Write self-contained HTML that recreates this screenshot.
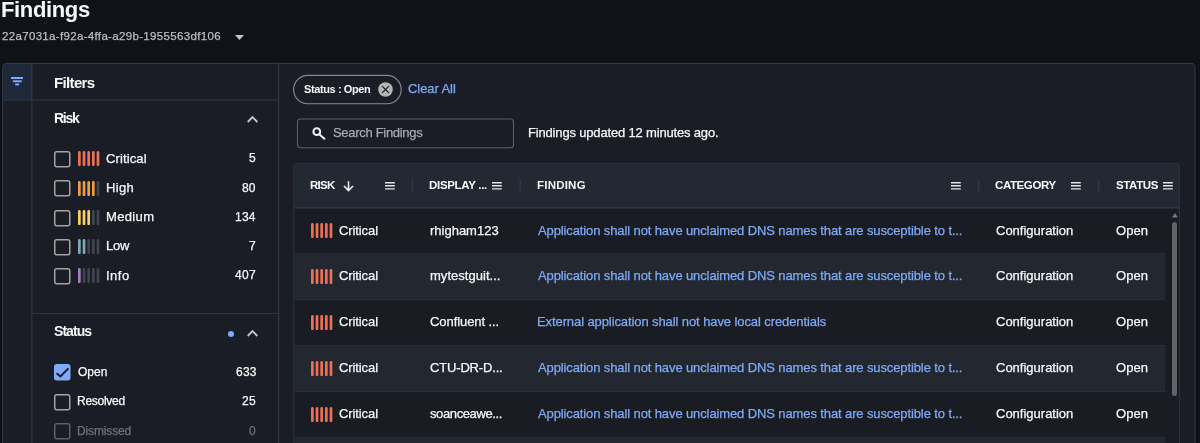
<!DOCTYPE html>
<html lang="en"><head><meta charset="utf-8"><title>Findings</title>
<style>
*{box-sizing:border-box;margin:0;padding:0}
html,body{width:1200px;height:443px;overflow:hidden;background:#0f1217;font-family:"Liberation Sans",sans-serif;color:#f2f3f5}
.abs{position:absolute}
.t{position:absolute;white-space:nowrap;line-height:1;will-change:transform;-webkit-text-stroke:0.25px currentColor}
.panel{position:absolute;background:#1a1d25;border:1px solid #2e333e}
.cb{position:absolute;width:16.5px;height:16.5px;border:1.6px solid #a3a4a8;border-radius:2.5px}
.hl{position:absolute;height:1px;background:#2e333e}
.vl{position:absolute;width:1px;background:#2e333e}
</style></head><body>

<div class="t" id="title" style="left:1.45px;top:-0.62px;font-size:22px;font-weight:700;-webkit-text-stroke:0;letter-spacing:-0.360px;color:#f7f8f9">Findings</div>
<div class="t" id="sub" style="left:2.26px;top:31.27px;font-size:11.5px;letter-spacing:0.330px;color:#bcbec4">22a7031a-f92a-4ffa-a29b-1955563df106</div>
<svg class="abs" style="left:235px;top:35px" width="9" height="5" viewBox="0 0 9 5"><path d="M0 0h9L4.5 5z" fill="#c3c5ca"/></svg>
<svg class="abs" style="left:0;top:0" width="1200" height="443" viewBox="0 0 1200 443"><path d="M2.6 445V67.45a4 4 0 0 1 4-4H1191.1a4 4 0 0 1 4 4V445" fill="none" stroke="#0a0c0f" stroke-width="3.4"/><path d="M2.6 445V67.45a4 4 0 0 1 4-4H1191.1a4 4 0 0 1 4 4V445" fill="#1a1d25" stroke="#313844" stroke-width="1.15"/><path d="M3.1500000000000004 100V67.45a3.5 3.5 0 0 1 3.5-3.45H31.85V100z" fill="#1e283a"/><rect x="31.3" y="63.95" width="1.1" height="400" fill="#313844"/><rect x="278.05" y="63.95" width="1.1" height="400" fill="#313844"/><rect x="3.1" y="99.45" width="274.95" height="1.1" fill="#2f3641"/><rect x="32.4" y="313" width="245.65" height="1" fill="#2d333e"/></svg>
<svg class="abs" style="left:10.8px;top:77.4px" width="12.5" height="9" viewBox="0 0 12.5 9"><rect x="0" y="0" width="12.5" height="2" fill="#7eaaf6"/><rect x="1.8" y="3.3" width="8.9" height="1.9" fill="#7eaaf6"/><rect x="4.2" y="6.5" width="3.9" height="1.9" fill="#7eaaf6"/></svg>
<div class="t" id="filters" style="left:53.54px;top:75.20px;font-size:15px;font-weight:700;-webkit-text-stroke:0;letter-spacing:-0.645px;color:#f7f8f9">Filters</div>
<div class="t" id="risk" style="left:53.72px;top:110.55px;font-size:14px;font-weight:700;-webkit-text-stroke:0;letter-spacing:-1.250px;color:#f7f8f9">Risk</div>
<svg class="abs" style="left:247px;top:115px" width="11" height="8" viewBox="0 0 11 8"><path d="M0.7 7L5.5 2.1L10.3 7" fill="none" stroke="#c6c8cc" stroke-width="1.8"/></svg>
<svg class="abs" style="left:54px;top:151.10px" width="17" height="17" viewBox="0 0 17 17"><rect x="0.75" y="0.75" width="15" height="15" rx="2" fill="none" stroke="#a5a3a0" stroke-width="1.5"/></svg>
<svg class="abs" style="left:77.6px;top:151.4px" width="24" height="15.2" viewBox="0 0 24 15.2"><rect x="0.00" y="0" width="2.7" height="15.2" rx="1.4" fill="#ef7053"/><rect x="4.66" y="0" width="2.7" height="15.2" rx="1.4" fill="#ef7053"/><rect x="9.32" y="0" width="2.7" height="15.2" rx="1.4" fill="#ef7053"/><rect x="13.98" y="0" width="2.7" height="15.2" rx="1.4" fill="#ef7053"/><rect x="18.64" y="0" width="2.7" height="15.2" rx="1.4" fill="#ef7053"/></svg>
<div class="t" id="rk0" style="left:106.40px;top:151.50px;font-size:13px;letter-spacing:0.116px;color:#f7f8f9">Critical</div>
<div class="t" id="rc0" style="left:249.29px;top:152.34px;font-size:12px;letter-spacing:0.000px;color:#f7f8f9">5</div>
<svg class="abs" style="left:54px;top:180.35px" width="17" height="17" viewBox="0 0 17 17"><rect x="0.75" y="0.75" width="15" height="15" rx="2" fill="none" stroke="#a5a3a0" stroke-width="1.5"/></svg>
<svg class="abs" style="left:77.6px;top:180.67000000000002px" width="24" height="15.2" viewBox="0 0 24 15.2"><rect x="0.00" y="0" width="2.7" height="15.2" rx="1.4" fill="#f09b46"/><rect x="4.66" y="0" width="2.7" height="15.2" rx="1.4" fill="#f09b46"/><rect x="9.32" y="0" width="2.7" height="15.2" rx="1.4" fill="#f09b46"/><rect x="13.98" y="0" width="2.7" height="15.2" rx="1.4" fill="#f09b46"/><rect x="18.64" y="0" width="2.7" height="15.2" rx="1.4" fill="#3f4551"/></svg>
<div class="t" id="rk1" style="left:105.93px;top:180.75px;font-size:13px;letter-spacing:0.313px;color:#f7f8f9">High</div>
<div class="t" id="rc1" style="left:242.39px;top:181.59px;font-size:12px;letter-spacing:-0.037px;color:#f7f8f9">80</div>
<svg class="abs" style="left:54px;top:209.60px" width="17" height="17" viewBox="0 0 17 17"><rect x="0.75" y="0.75" width="15" height="15" rx="2" fill="none" stroke="#a5a3a0" stroke-width="1.5"/></svg>
<svg class="abs" style="left:77.6px;top:209.94px" width="24" height="15.2" viewBox="0 0 24 15.2"><rect x="0.00" y="0" width="2.7" height="15.2" rx="1.4" fill="#fad264"/><rect x="4.66" y="0" width="2.7" height="15.2" rx="1.4" fill="#fad264"/><rect x="9.32" y="0" width="2.7" height="15.2" rx="1.4" fill="#fad264"/><rect x="13.98" y="0" width="2.7" height="15.2" rx="1.4" fill="#3f4551"/><rect x="18.64" y="0" width="2.7" height="15.2" rx="1.4" fill="#3f4551"/></svg>
<div class="t" id="rk2" style="left:105.64px;top:210.00px;font-size:13px;letter-spacing:0.353px;color:#f7f8f9">Medium</div>
<div class="t" id="rc2" style="left:234.65px;top:210.84px;font-size:12px;letter-spacing:0.219px;color:#f7f8f9">134</div>
<svg class="abs" style="left:54px;top:238.85px" width="17" height="17" viewBox="0 0 17 17"><rect x="0.75" y="0.75" width="15" height="15" rx="2" fill="none" stroke="#a5a3a0" stroke-width="1.5"/></svg>
<svg class="abs" style="left:77.6px;top:239.21px" width="24" height="15.2" viewBox="0 0 24 15.2"><rect x="0.00" y="0" width="2.7" height="15.2" rx="1.4" fill="#7daab4"/><rect x="4.66" y="0" width="2.7" height="15.2" rx="1.4" fill="#7daab4"/><rect x="9.32" y="0" width="2.7" height="15.2" rx="1.4" fill="#3f4551"/><rect x="13.98" y="0" width="2.7" height="15.2" rx="1.4" fill="#3f4551"/><rect x="18.64" y="0" width="2.7" height="15.2" rx="1.4" fill="#3f4551"/></svg>
<div class="t" id="rk3" style="left:105.64px;top:239.25px;font-size:13px;letter-spacing:-0.185px;color:#f7f8f9">Low</div>
<div class="t" id="rc3" style="left:249.41px;top:240.09px;font-size:12px;letter-spacing:0.000px;color:#f7f8f9">7</div>
<svg class="abs" style="left:54px;top:268.10px" width="17" height="17" viewBox="0 0 17 17"><rect x="0.75" y="0.75" width="15" height="15" rx="2" fill="none" stroke="#a5a3a0" stroke-width="1.5"/></svg>
<svg class="abs" style="left:77.6px;top:268.48px" width="24" height="15.2" viewBox="0 0 24 15.2"><rect x="0.00" y="0" width="2.7" height="15.2" rx="1.4" fill="#aa7dc3"/><rect x="4.66" y="0" width="2.7" height="15.2" rx="1.4" fill="#3f4551"/><rect x="9.32" y="0" width="2.7" height="15.2" rx="1.4" fill="#3f4551"/><rect x="13.98" y="0" width="2.7" height="15.2" rx="1.4" fill="#3f4551"/><rect x="18.64" y="0" width="2.7" height="15.2" rx="1.4" fill="#3f4551"/></svg>
<div class="t" id="rk4" style="left:105.50px;top:268.50px;font-size:13px;letter-spacing:0.480px;color:#f7f8f9">Info</div>
<div class="t" id="rc4" style="left:234.69px;top:269.34px;font-size:12px;letter-spacing:0.326px;color:#f7f8f9">407</div>
<div class="t" id="status" style="left:53.67px;top:324.15px;font-size:14px;font-weight:700;-webkit-text-stroke:0;letter-spacing:-0.945px;color:#f7f8f9">Status</div>
<div class="abs" style="left:228px;top:331px;width:6px;height:6px;border-radius:50%;background:#7eaaf6"></div>
<svg class="abs" style="left:247px;top:328.5px" width="11" height="8" viewBox="0 0 11 8"><path d="M0.7 7L5.5 2.1L10.3 7" fill="none" stroke="#c6c8cc" stroke-width="1.8"/></svg>
<svg class="abs" style="left:54px;top:364.30px" width="17" height="17" viewBox="0 0 17 17"><rect x="0.75" y="0.75" width="15" height="15" rx="2" fill="#7eaaf6" stroke="#7eaaf6" stroke-width="1.5"/></svg>
<svg class="abs" style="left:54px;top:364.3px" width="17" height="17" viewBox="0 0 17 17"><path d="M2.6 9.3L6.4 12.5L14.4 4.3" fill="none" stroke="#14171d" stroke-width="1.9"/></svg>
<div class="t" id="sk0" style="left:77.87px;top:366.04px;font-size:12px;letter-spacing:-0.015px;color:#f7f8f9">Open</div>
<div class="t" id="sc0" style="left:235.52px;top:366.04px;font-size:12px;letter-spacing:0.226px;color:#f7f8f9">633</div>
<svg class="abs" style="left:54px;top:393.60px" width="17" height="17" viewBox="0 0 17 17"><rect x="0.75" y="0.75" width="15" height="15" rx="2" fill="none" stroke="#a5a3a0" stroke-width="1.5"/></svg>
<div class="t" id="sk1" style="left:77.34px;top:395.34px;font-size:12px;letter-spacing:-0.274px;color:#f7f8f9">Resolved</div>
<div class="t" id="sc1" style="left:242.44px;top:395.34px;font-size:12px;letter-spacing:0.203px;color:#f7f8f9">25</div>
<svg class="abs" style="left:54px;top:422.90px" width="17" height="17" viewBox="0 0 17 17"><rect x="0.75" y="0.75" width="15" height="15" rx="2" fill="none" stroke="#5d6069" stroke-width="1.5"/></svg>
<div class="t" id="sk2" style="left:77.26px;top:424.64px;font-size:12px;letter-spacing:-0.141px;color:#6d717a">Dismissed</div>
<div class="t" id="sc2" style="left:249.31px;top:424.64px;font-size:12px;letter-spacing:0.000px;color:#6d717a">0</div>
<svg class="abs" style="left:290px;top:72px" width="116" height="36" viewBox="0 0 116 36"><rect x="3.6" y="3.4" width="107.6" height="28.3" rx="14.15" fill="none" stroke="#858993" stroke-width="1.15"/></svg>
<div class="t" id="chip" style="left:303.96px;top:83.69px;font-size:11px;font-weight:700;-webkit-text-stroke:0;letter-spacing:-0.395px;color:#f7f8f9">Status : Open</div>
<svg class="abs" style="left:378.2px;top:81.8px" width="15" height="15" viewBox="0 0 15 15"><circle cx="7.5" cy="7.5" r="7.3" fill="#b6b4b0"/><path d="M4.1 4.1L10.9 10.9M10.9 4.1L4.1 10.9" stroke="#1a1d25" stroke-width="1.2"/></svg>
<div class="t" id="clear" style="left:408.06px;top:82.00px;font-size:13px;letter-spacing:-0.074px;color:#7eaaf6">Clear All</div>
<svg class="abs" style="left:295px;top:116px" width="222" height="36" viewBox="0 0 222 36"><rect x="2.5" y="3.0" width="216" height="28.8" rx="3" fill="none" stroke="#5a5f6a" stroke-width="1.1"/></svg>
<svg class="abs" style="left:312px;top:127px" width="14" height="13" viewBox="0 0 14 13"><circle cx="4.8" cy="4.7" r="3.4" fill="none" stroke="#f2f3f5" stroke-width="2"/><path d="M7.3 7.2L12.4 11.8" stroke="#f2f3f5" stroke-width="1.9" stroke-linecap="round"/></svg>
<div class="t" id="search" style="left:332.68px;top:126.20px;font-size:13px;letter-spacing:-0.305px;color:#a6a9b0">Search Findings</div>
<div class="t" id="upd" style="left:527.64px;top:126.00px;font-size:13px;letter-spacing:-0.171px;color:#f7f8f9">Findings updated 12 minutes ago.</div>
<svg class="abs" style="left:0;top:0" width="1200" height="443" viewBox="0 0 1200 443"><path d="M293.7 444V166.6a3 3 0 0 1 3-3H1176.5a3 3 0 0 1 3 3V444" fill="#191c23" stroke="#2c323d" stroke-width="1.1"/><path d="M294.2 207.7V166.6a2.5 2.5 0 0 1 2.5-2.5H1176.5a2.5 2.5 0 0 1 2.5 2.5V207.7z" fill="#232933"/><rect x="294.2" y="254.17" width="871.10" height="44.97" fill="#222730"/><rect x="294.2" y="346.11" width="871.10" height="44.97" fill="#222730"/><rect x="294.2" y="438.05" width="871.10" height="44.97" fill="#222730"/><rect x="294.2" y="206.95" width="884.80" height="1.6" fill="#2f3643"/><rect x="294.2" y="253.17" width="871.10" height="1" fill="#2b313c"/><rect x="294.2" y="299.14" width="871.10" height="1" fill="#2b313c"/><rect x="294.2" y="345.11" width="871.10" height="1" fill="#2b313c"/><rect x="294.2" y="391.08" width="871.10" height="1" fill="#2b313c"/><rect x="294.2" y="437.05" width="871.10" height="1" fill="#2b313c"/><rect x="294.2" y="483.02" width="871.10" height="1" fill="#2b313c"/><rect x="411.8" y="179.3" width="1" height="12.5" fill="#383e4a"/><rect x="519.7" y="179.3" width="1" height="12.5" fill="#383e4a"/><rect x="978.2" y="179.3" width="1" height="12.5" fill="#383e4a"/><rect x="1098.2" y="179.3" width="1" height="12.5" fill="#383e4a"/></svg>
<div class="t" id="h1" style="left:309.92px;top:180.47px;font-size:11.5px;font-weight:700;-webkit-text-stroke:0;letter-spacing:-0.743px;color:#f7f8f9">RISK</div>
<svg class="abs" style="left:342.6px;top:180.6px" width="11" height="11" viewBox="0 0 11 11"><path d="M5.5 .3V9.2M1 5L5.5 9.5L10 5" fill="none" stroke="#f2f3f5" stroke-width="1.6"/></svg>
<svg class="abs" style="left:384.6px;top:181.7px" width="10" height="8" viewBox="0 0 10 8"><path d="M0 .7h9.8M0 3.75h9.8M0 6.8h9.8" stroke="#e4e5e8" stroke-width="1.35"/></svg>
<div class="t" id="h2" style="left:429.40px;top:180.47px;font-size:11.5px;font-weight:700;-webkit-text-stroke:0;letter-spacing:-0.311px;color:#f7f8f9">DISPLAY ...</div>
<svg class="abs" style="left:492.2px;top:181.7px" width="10" height="8" viewBox="0 0 10 8"><path d="M0 .7h9.8M0 3.75h9.8M0 6.8h9.8" stroke="#e4e5e8" stroke-width="1.35"/></svg>
<div class="t" id="h3" style="left:537.34px;top:180.47px;font-size:11.5px;font-weight:700;-webkit-text-stroke:0;letter-spacing:0.218px;color:#f7f8f9">FINDING</div>
<svg class="abs" style="left:950.5px;top:181.7px" width="10" height="8" viewBox="0 0 10 8"><path d="M0 .7h9.8M0 3.75h9.8M0 6.8h9.8" stroke="#e4e5e8" stroke-width="1.35"/></svg>
<div class="t" id="h4" style="left:995.48px;top:180.47px;font-size:11.5px;font-weight:700;-webkit-text-stroke:0;letter-spacing:-0.402px;color:#f7f8f9">CATEGORY</div>
<svg class="abs" style="left:1070.7px;top:181.7px" width="10" height="8" viewBox="0 0 10 8"><path d="M0 .7h9.8M0 3.75h9.8M0 6.8h9.8" stroke="#e4e5e8" stroke-width="1.35"/></svg>
<div class="t" id="h5" style="left:1115.52px;top:180.47px;font-size:11.5px;font-weight:700;-webkit-text-stroke:0;letter-spacing:-0.371px;color:#f7f8f9">STATUS</div>
<svg class="abs" style="left:1163.2px;top:181.7px" width="10" height="8" viewBox="0 0 10 8"><path d="M0 .7h9.8M0 3.75h9.8M0 6.8h9.8" stroke="#e4e5e8" stroke-width="1.35"/></svg>
<svg class="abs" style="left:310.7px;top:223.1px" width="24" height="15.2" viewBox="0 0 24 15.2"><rect x="0.00" y="0" width="2.7" height="15.2" rx="1.4" fill="#ef7053"/><rect x="4.66" y="0" width="2.7" height="15.2" rx="1.4" fill="#ef7053"/><rect x="9.32" y="0" width="2.7" height="15.2" rx="1.4" fill="#ef7053"/><rect x="13.98" y="0" width="2.7" height="15.2" rx="1.4" fill="#ef7053"/><rect x="18.64" y="0" width="2.7" height="15.2" rx="1.4" fill="#ef7053"/></svg>
<div class="t" id="a0" style="left:338.63px;top:223.60px;font-size:13px;letter-spacing:-0.100px;color:#f7f8f9">Critical</div>
<div class="t" id="b0" style="left:429.56px;top:223.60px;font-size:13px;letter-spacing:-0.004px;color:#f7f8f9">rhigham123</div>
<div class="t" id="c0" style="left:537.76px;top:223.60px;font-size:13px;letter-spacing:-0.113px;color:#7eaaf6">Application shall not have unclaimed DNS names that are susceptible to t...</div>
<div class="t" id="d0" style="left:995.60px;top:223.60px;font-size:13px;letter-spacing:0.000px;color:#f7f8f9">Configuration</div>
<div class="t" id="e0" style="left:1115.59px;top:223.60px;font-size:13px;letter-spacing:0.080px;color:#f7f8f9">Open</div>
<svg class="abs" style="left:310.7px;top:268.95px" width="24" height="15.2" viewBox="0 0 24 15.2"><rect x="0.00" y="0" width="2.7" height="15.2" rx="1.4" fill="#ef7053"/><rect x="4.66" y="0" width="2.7" height="15.2" rx="1.4" fill="#ef7053"/><rect x="9.32" y="0" width="2.7" height="15.2" rx="1.4" fill="#ef7053"/><rect x="13.98" y="0" width="2.7" height="15.2" rx="1.4" fill="#ef7053"/><rect x="18.64" y="0" width="2.7" height="15.2" rx="1.4" fill="#ef7053"/></svg>
<div class="t" id="a1" style="left:338.63px;top:269.45px;font-size:13px;letter-spacing:-0.100px;color:#f7f8f9">Critical</div>
<div class="t" id="b1" style="left:429.56px;top:269.45px;font-size:13px;letter-spacing:0.034px;color:#f7f8f9">mytestguit...</div>
<div class="t" id="c1" style="left:537.76px;top:269.45px;font-size:13px;letter-spacing:-0.113px;color:#7eaaf6">Application shall not have unclaimed DNS names that are susceptible to t...</div>
<div class="t" id="d1" style="left:995.60px;top:269.45px;font-size:13px;letter-spacing:0.000px;color:#f7f8f9">Configuration</div>
<div class="t" id="e1" style="left:1115.59px;top:269.45px;font-size:13px;letter-spacing:0.080px;color:#f7f8f9">Open</div>
<svg class="abs" style="left:310.7px;top:314.8px" width="24" height="15.2" viewBox="0 0 24 15.2"><rect x="0.00" y="0" width="2.7" height="15.2" rx="1.4" fill="#ef7053"/><rect x="4.66" y="0" width="2.7" height="15.2" rx="1.4" fill="#ef7053"/><rect x="9.32" y="0" width="2.7" height="15.2" rx="1.4" fill="#ef7053"/><rect x="13.98" y="0" width="2.7" height="15.2" rx="1.4" fill="#ef7053"/><rect x="18.64" y="0" width="2.7" height="15.2" rx="1.4" fill="#ef7053"/></svg>
<div class="t" id="a2" style="left:338.63px;top:315.30px;font-size:13px;letter-spacing:-0.100px;color:#f7f8f9">Critical</div>
<div class="t" id="b2" style="left:429.56px;top:315.30px;font-size:13px;letter-spacing:-0.072px;color:#f7f8f9">Confluent ...</div>
<div class="t" id="c2" style="left:536.86px;top:315.30px;font-size:13px;letter-spacing:-0.095px;color:#7eaaf6">External application shall not have local credentials</div>
<div class="t" id="d2" style="left:995.60px;top:315.30px;font-size:13px;letter-spacing:0.000px;color:#f7f8f9">Configuration</div>
<div class="t" id="e2" style="left:1115.59px;top:315.30px;font-size:13px;letter-spacing:0.080px;color:#f7f8f9">Open</div>
<svg class="abs" style="left:310.7px;top:360.65px" width="24" height="15.2" viewBox="0 0 24 15.2"><rect x="0.00" y="0" width="2.7" height="15.2" rx="1.4" fill="#ef7053"/><rect x="4.66" y="0" width="2.7" height="15.2" rx="1.4" fill="#ef7053"/><rect x="9.32" y="0" width="2.7" height="15.2" rx="1.4" fill="#ef7053"/><rect x="13.98" y="0" width="2.7" height="15.2" rx="1.4" fill="#ef7053"/><rect x="18.64" y="0" width="2.7" height="15.2" rx="1.4" fill="#ef7053"/></svg>
<div class="t" id="a3" style="left:338.63px;top:361.15px;font-size:13px;letter-spacing:-0.100px;color:#f7f8f9">Critical</div>
<div class="t" id="b3" style="left:429.56px;top:361.15px;font-size:13px;letter-spacing:-0.166px;color:#f7f8f9">CTU-DR-D...</div>
<div class="t" id="c3" style="left:537.76px;top:361.15px;font-size:13px;letter-spacing:-0.113px;color:#7eaaf6">Application shall not have unclaimed DNS names that are susceptible to t...</div>
<div class="t" id="d3" style="left:995.60px;top:361.15px;font-size:13px;letter-spacing:0.000px;color:#f7f8f9">Configuration</div>
<div class="t" id="e3" style="left:1115.59px;top:361.15px;font-size:13px;letter-spacing:0.080px;color:#f7f8f9">Open</div>
<svg class="abs" style="left:310.7px;top:406.5px" width="24" height="15.2" viewBox="0 0 24 15.2"><rect x="0.00" y="0" width="2.7" height="15.2" rx="1.4" fill="#ef7053"/><rect x="4.66" y="0" width="2.7" height="15.2" rx="1.4" fill="#ef7053"/><rect x="9.32" y="0" width="2.7" height="15.2" rx="1.4" fill="#ef7053"/><rect x="13.98" y="0" width="2.7" height="15.2" rx="1.4" fill="#ef7053"/><rect x="18.64" y="0" width="2.7" height="15.2" rx="1.4" fill="#ef7053"/></svg>
<div class="t" id="a4" style="left:338.63px;top:407.00px;font-size:13px;letter-spacing:-0.100px;color:#f7f8f9">Critical</div>
<div class="t" id="b4" style="left:429.56px;top:407.00px;font-size:13px;letter-spacing:-0.384px;color:#f7f8f9">soanceawe...</div>
<div class="t" id="c4" style="left:537.76px;top:407.00px;font-size:13px;letter-spacing:-0.113px;color:#7eaaf6">Application shall not have unclaimed DNS names that are susceptible to t...</div>
<div class="t" id="d4" style="left:995.60px;top:407.00px;font-size:13px;letter-spacing:0.000px;color:#f7f8f9">Configuration</div>
<div class="t" id="e4" style="left:1115.59px;top:407.00px;font-size:13px;letter-spacing:0.080px;color:#f7f8f9">Open</div>
<svg class="abs" style="left:1171.6px;top:213.4px" width="6" height="4.6" viewBox="0 0 6 4.6"><path d="M0 4.6L3 0L6 4.6z" fill="#74777d"/></svg>
<div class="abs" style="left:1171.9px;top:222.4px;width:5.3px;height:173.2px;border-radius:2.6px;background:#606368"></div>
</body></html>
